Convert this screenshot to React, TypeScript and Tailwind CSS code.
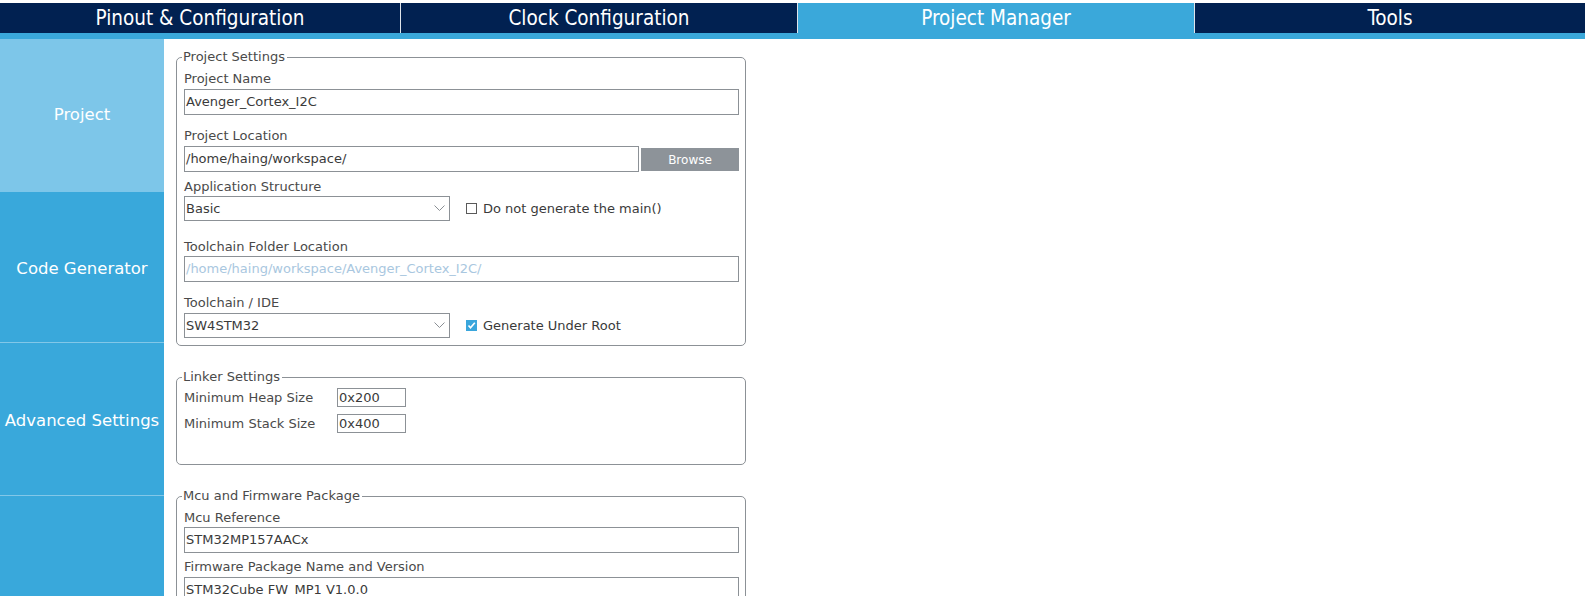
import React from "react"

const TABS = [
  { label: "Pinout & Configuration", w: "w-[400px]", active: false },
  { label: "Clock Configuration", w: "w-[397px]", active: false },
  { label: "Project Manager", w: "w-[397px]", active: true },
  { label: "Tools", w: "flex-1", active: false },
]

const Chevron = () => (
  <svg width="11" height="7" viewBox="0 0 11 7" className="shrink-0">
    <polyline points="0.5,0.5 5.5,5.5 10.5,0.5" fill="none" stroke="#8a8f94" strokeWidth="1" />
  </svg>
)

const Label = ({ children, className = "" }: { children: React.ReactNode; className?: string }) => (
  <div className={`h-[16px] text-[13px] leading-[16px] text-[#4a4a4a] ${className}`}>{children}</div>
)

const TextBox = ({ value, className = "", muted = false }: { value: string; className?: string; muted?: boolean }) => (
  <div
    className={`flex h-[26px] items-center border border-[#8c9196] pl-[1px] text-[13px] whitespace-nowrap overflow-hidden ${
      muted ? "text-[#a9c7e0]" : "text-[#3a3a3a]"
    } ${className}`}
  >
    {value}
  </div>
)

const Select = ({ value }: { value: string }) => (
  <div className="flex h-[25px] w-[266px] items-center justify-between border border-[#8c9196] pl-[1px] pr-[4px] text-[13px] text-[#3a3a3a]">
    <span>{value}</span>
    <Chevron />
  </div>
)

const Check = ({ checked, label }: { checked: boolean; label: string }) => (
  <div className="ml-[16px] flex items-center text-[13px] text-[#3a3a3a]">
    {checked ? (
      <div className="flex h-[11px] w-[11px] items-center justify-center bg-[#3aa6dc]">
        <svg width="9" height="9" viewBox="0 0 9 9">
          <polyline points="1.5,4.5 3.5,6.8 7.8,1.8" fill="none" stroke="#fff" strokeWidth="1.6" />
        </svg>
      </div>
    ) : (
      <div className="h-[11px] w-[11px] border border-[#5a5a5a] bg-white" />
    )}
    <span className="ml-[6px]">{label}</span>
  </div>
)

const Group = ({ title, children, className = "" }: { title: string; children: React.ReactNode; className?: string }) => (
  <fieldset className={`w-[570px] rounded-[5px] border border-[#8c9196] pl-[7px] pr-[6px] ${className}`}>
    <legend className="ml-[-2px] pl-[1px] pr-[2px] text-[13px] leading-[16px] text-[#4a4a4a]">{title}</legend>
    {children}
  </fieldset>
)

export default function App() {
  return (
    <div className="h-[596px] w-full overflow-hidden bg-white font-['DejaVu_Sans',sans-serif]">
      {/* top tabs */}
      <div className="pt-[3px]">
        <div className="flex h-[30px] bg-[#012151]">
          {TABS.map((t, i) => (
            <div
              key={t.label}
              className={`flex items-center justify-center font-['DejaVu_Sans_Condensed','DejaVu_Sans',sans-serif] text-[20.5px] text-white ${t.w} ${
                i > 0 ? "border-l border-[#dfe4ea]" : ""
              } ${t.active ? "bg-[#3aa8da]" : ""}`}
            >
              {t.label}
            </div>
          ))}
        </div>
        <div className="h-[6px] bg-[#3aa8da]" />
      </div>

      <div className="flex h-[557px]">
        {/* side menu */}
        <div className="flex w-[164px] shrink-0 flex-col bg-[#39a8db] text-[16.5px] text-white">
          <div className="flex h-[153px] items-center justify-center bg-[#7dc6e9]">Project</div>
          <div className="flex h-[150px] items-center justify-center pt-[4px]">Code Generator</div>
          <div className="flex h-[153px] items-center justify-center border-t border-[#82c7e8] pt-[5px]">Advanced Settings</div>
          <div className="flex-1 border-t border-[#82c7e8]" />
        </div>

        {/* settings */}
        <div className="flex-1 pl-[12px] pt-[10px]">
          <Group title="Project Settings" className="pb-[7px]">
            <Label className="mt-[6px]">Project Name</Label>
            <TextBox value="Avenger_Cortex_I2C" className="mt-[2px]" />

            <Label className="mt-[13px]">Project Location</Label>
            <div className="mt-[2px] flex items-center gap-[2px]">
              <TextBox value="/home/haing/workspace/" className="flex-1" />
              <div className="flex h-[23px] w-[98px] items-center justify-center bg-[#8d9399] pt-[1px] text-[12px] text-white">
                Browse
              </div>
            </div>

            <Label className="mt-[7px]">Application Structure</Label>
            <div className="mt-[1px] flex items-center">
              <Select value="Basic" />
              <Check checked={false} label="Do not generate the main()" />
            </div>

            <Label className="mt-[18px]">Toolchain Folder Location</Label>
            <TextBox value="/home/haing/workspace/Avenger_Cortex_I2C/" muted className="mt-[1px]" />

            <Label className="mt-[13px]">Toolchain / IDE</Label>
            <div className="mt-[2px] flex items-center">
              <Select value="SW4STM32" />
              <Check checked label="Generate Under Root" />
            </div>
          </Group>

          <Group title="Linker Settings" className="mt-[23px] pb-[31px]">
            <div className="mt-[3px] flex items-center">
              <div className="w-[153px] text-[13px] text-[#4a4a4a]">Minimum Heap Size</div>
              <div className="flex h-[19px] w-[69px] items-center border border-[#8c9196] pl-[1px] text-[13px] text-[#3a3a3a]">0x200</div>
            </div>
            <div className="mt-[6px] flex items-center">
              <div className="w-[153px] text-[13px] text-[#4a4a4a]">Minimum Stack Size</div>
              <div className="flex h-[19px] w-[69px] items-center border border-[#8c9196] pl-[1px] text-[13px] text-[#3a3a3a]">0x400</div>
            </div>
          </Group>

          <Group title="Mcu and Firmware Package" className="mt-[23px] pb-[7px]">
            <Label className="mt-[6px]">Mcu Reference</Label>
            <TextBox value="STM32MP157AACx" className="mt-[1px]" />
            <Label className="mt-[6px]">Firmware Package Name and Version</Label>
            <TextBox value="STM32Cube FW_MP1 V1.0.0" className="mt-[2px]" />
          </Group>
        </div>
      </div>
    </div>
  )
}
